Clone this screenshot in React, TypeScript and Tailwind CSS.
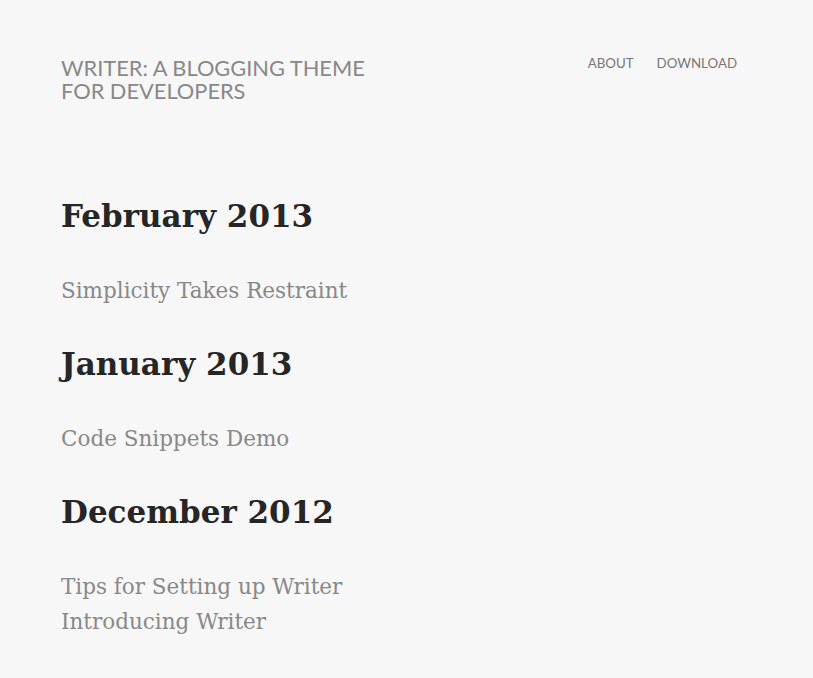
export default function App() {
  const months = [
    { title: "February 2013", posts: ["Simplicity Takes Restraint"] },
    { title: "January 2013", posts: ["Code Snippets Demo"] },
    { title: "December 2012", posts: ["Tips for Setting up Writer", "Introducing Writer"] },
  ]

  return (
    <div className="min-h-screen bg-[#f7f7f7] px-[61px] pt-[56px]">
      <header className="flex items-start justify-between pr-[15px]">
        <a href="#" className="block w-[330px] font-['Lato','Noto_Sans',sans-serif] text-[21.8px] leading-[23px] uppercase text-[#888]">
          Writer: A Blogging Theme for Developers
        </a>
        <nav className="flex gap-[23px] font-['Lato','Noto_Sans',sans-serif] text-[13.3px] leading-[14px] uppercase text-[#777]">
          <a href="#">About</a>
          <a href="#">Download</a>
        </nav>
      </header>

      <main className="mt-[94px]">
        {months.map((m) => (
          <section key={m.title} className="mb-[36px]">
            <h2 className="font-['DejaVu_Serif',serif] text-[31px] leading-[40px] font-bold text-[#262626]">
              {m.title}
            </h2>
            <ul className="mt-[37px]">
              {m.posts.map((p) => (
                <li key={p}>
                  <a href="#" className="font-['DejaVu_Serif',serif] text-[21.5px] leading-[35px] text-[#888]">
                    {p}
                  </a>
                </li>
              ))}
            </ul>
          </section>
        ))}
      </main>
    </div>
  )
}
